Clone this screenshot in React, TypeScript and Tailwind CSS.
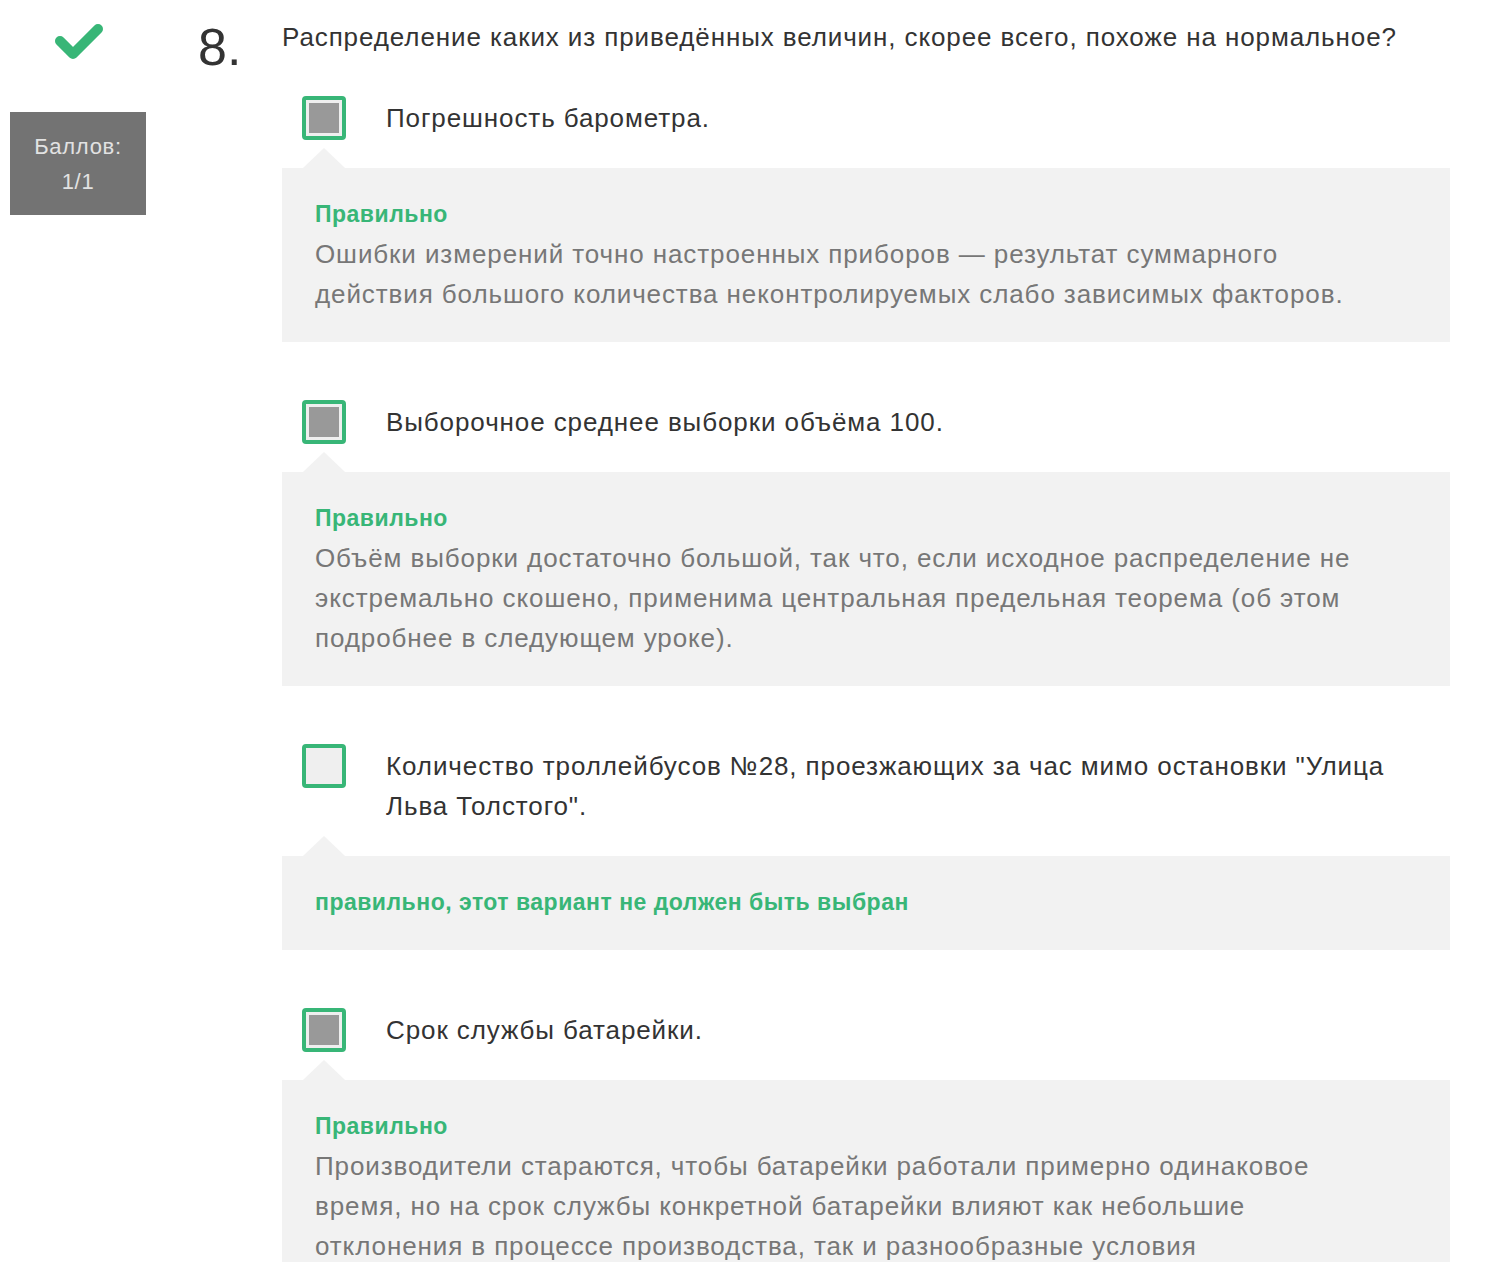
import React from 'react';

type Option = {
  text: string;
  checked: boolean;
  label: string;
  explanation?: string;
  wraps?: boolean;
};

const options: Option[] = [
  {
    text: 'Погрешность барометра.',
    checked: true,
    label: 'Правильно',
    explanation:
      'Ошибки измерений точно настроенных приборов — результат суммарного действия большого количества неконтролируемых слабо зависимых факторов.',
  },
  {
    text: 'Выборочное среднее выборки объёма 100.',
    checked: true,
    label: 'Правильно',
    explanation:
      'Объём выборки достаточно большой, так что, если исходное распределение не экстремально скошено, применима центральная предельная теорема (об этом подробнее в следующем уроке).',
  },
  {
    text: 'Количество троллейбусов №28, проезжающих за час мимо остановки "Улица Льва Толстого".',
    checked: false,
    label: 'правильно, этот вариант не должен быть выбран',
    wraps: true,
  },
  {
    text: 'Срок службы батарейки.',
    checked: true,
    label: 'Правильно',
    explanation:
      'Производители стараются, чтобы батарейки работали примерно одинаковое время, но на срок службы конкретной батарейки влияют как небольшие отклонения в процессе производства, так и разнообразные условия эксплуатации.',
  },
];

const Checkbox = ({ checked }: { checked: boolean }) => (
  <div className="-mt-[2px] w-[44px] h-[44px] shrink-0 rounded-[4px] border-[4px] border-[#38b677] bg-[#efefef] p-[3px]">
    {checked && <div className="w-full h-full bg-[#999999]" />}
  </div>
);

const OptionBlock = ({ option, first }: { option: Option; first: boolean }) => (
  <div className={first ? 'mt-[41px]' : 'mt-[60px]'}>
    <div className="flex items-start pl-[20px]">
      <Checkbox checked={option.checked} />
      <p className="ml-[40px] flex-1 text-[26px] leading-[40px] tracking-[0.9px] text-[#333333]">{option.text}</p>
    </div>
    <div
      className={`relative bg-[#f2f2f2] pl-[33px] pr-[40px] pt-[26px] pb-[28px] ${option.wraps ? 'mt-[30px]' : 'mt-[28px]'}`}
    >
      <div className="absolute left-[21px] -top-[20px] w-0 h-0 border-l-[21px] border-r-[21px] border-b-[20px] border-l-transparent border-r-transparent border-b-[#f2f2f2]" />
      <p className="text-[23px] leading-[40px] tracking-[0.5px] font-bold text-[#38b677]">{option.label}</p>
      {option.explanation && (
        <p className="w-[1060px] text-[26px] leading-[40px] tracking-[0.9px] text-[#777777]">{option.explanation}</p>
      )}
    </div>
  </div>
);

export default function App() {
  return (
    <div className="min-h-screen bg-white flex" style={{ fontFamily: '"Liberation Sans", Arial, sans-serif' }}>
      <aside className="w-[198px] shrink-0 pl-[10px]">
        <div className="w-[136px] flex justify-center pt-[23px] pl-[2px]">
          <svg width="50" height="40" viewBox="0 0 50 40" fill="none">
            <polyline
              points="6,18 19,31 44,6"
              stroke="#38b677"
              strokeWidth="10"
              strokeLinecap="round"
              strokeLinejoin="round"
            />
          </svg>
        </div>
        <div className="mt-[49px] w-[136px] bg-[#737373] pt-[17px] pb-[16px] text-center text-[22px] leading-[35px] tracking-[0.7px] text-[#e2e2e2]">
          <div>Баллов:</div>
          <div>1/1</div>
        </div>
      </aside>
      <div className="w-[84px] shrink-0 pt-[21px] text-[52px] leading-[52px] text-[#333333]">8.</div>
      <main className="w-[1168px] shrink-0 pt-[17px]">
        <h2 className="text-[26px] leading-[40px] tracking-[0.9px] text-[#333333]">
          Распределение каких из приведённых величин, скорее всего, похоже на нормальное?
        </h2>
        {options.map((o, i) => (
          <OptionBlock key={i} option={o} first={i === 0} />
        ))}
      </main>
    </div>
  );
}
